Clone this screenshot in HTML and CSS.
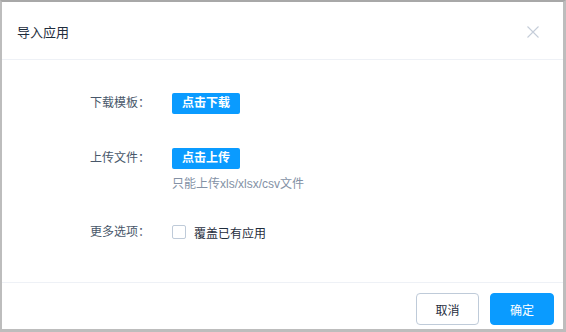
FILE: index.html
```html
<!DOCTYPE html>
<html lang="zh">
<head>
    <meta charset="UTF-8">
    <meta name="viewport" content="width=device-width, initial-scale=1.0">
    <title>导入应用</title>
    <link rel="stylesheet" href="styles.css">
</head>
<body>
    <div class="dialog">
        <div class="dialog-header">
            <span class="dialog-title">导入应用</span>
            <button class="dialog-close" aria-label="关闭">
                <svg width="12" height="12" viewBox="0 0 12 12">
                    <path d="M0.5 0.5 L11.5 11.5 M11.5 0.5 L0.5 11.5" stroke="#c5cdd9" stroke-width="1.1" fill="none"/>
                </svg>
            </button>
        </div>

        <div class="dialog-body">
            <div class="form-row row-download">
                <label class="form-label">下载模板：</label>
                <div class="form-control">
                    <button class="btn-small">点击下载</button>
                </div>
            </div>
            <div class="form-row row-upload">
                <label class="form-label">上传文件：</label>
                <div class="form-control">
                    <button class="btn-small">点击上传</button>
                    <div class="upload-tip">只能上传xls/xlsx/csv文件</div>
                </div>
            </div>
            <div class="form-row row-options">
                <label class="form-label">更多选项：</label>
                <div class="form-control">
                    <label class="checkbox">
                        <span class="checkbox-box"></span>
                        <span class="checkbox-text">覆盖已有应用</span>
                    </label>
                </div>
            </div>
        </div>

        <div class="dialog-footer">
            <button class="btn btn-default">取消</button>
            <button class="btn btn-primary">确定</button>
        </div>
    </div>
</body>
</html>
```

FILE: styles.css
```css
body {
    margin: 0;
    background-color: #fff;
    font-family: "Liberation Sans", "Noto Sans CJK SC", sans-serif;
    color: #1f2d3d;
}

.dialog {
    width: 561px;
    height: 327px;
    border-style: solid;
    border-color: #bdbdbd;
    border-width: 2px 3px 3px 2px;
    border-top-color: #a8a8a8;
    background-color: #fff;
    display: flex;
    flex-direction: column;
}

.dialog-header {
    height: 57px;
    border-bottom: 1px solid #eef1f6;
    display: flex;
    align-items: center;
    justify-content: space-between;
    padding: 0 24px 0 15px;
}

.dialog-title {
    font-size: 13px;
    color: #1f2d3d;
    padding-top: 2px;
}

.dialog-close {
    border: none;
    background: none;
    padding: 0;
    width: 12px;
    height: 12px;
    margin-top: 3px;
    cursor: pointer;
    display: flex;
}

.dialog-body {
    flex: 1;
    padding: 33px 0 0 88px;
}

.form-row {
    display: flex;
    align-items: flex-start;
}

.form-label {
    width: 82px;
    font-size: 12px;
    line-height: 21px;
    color: #48576a;
}

.row-download {
    margin-bottom: 34px;
}

.row-upload {
    margin-bottom: 30px;
}

.btn-small {
    height: 21px;
    padding: 0 10px;
    border: none;
    border-radius: 2px;
    background-color: #0a9bff;
    color: #fff;
    font-family: inherit;
    font-size: 12px;
    font-weight: bold;
    line-height: 21px;
    display: block;
}

.upload-tip {
    margin-top: 7px;
    font-size: 12px;
    line-height: 16px;
    color: #8391a5;
}

.row-options .form-label {
    line-height: 20px;
}

.checkbox {
    display: flex;
    align-items: center;
    height: 20px;
}

.checkbox-box {
    width: 12px;
    height: 12px;
    border: 1px solid #bfcbd9;
    border-radius: 2px;
    margin-right: 8px;
}

.checkbox-text {
    font-size: 12px;
    color: #1f2d3d;
}

.dialog-footer {
    border-top: 1px solid #eef1f6;
    display: flex;
    justify-content: flex-end;
    gap: 11px;
    padding: 10px 9px 4px 0;
}

.btn {
    height: 32px;
    border-radius: 4px;
    font-family: inherit;
    font-size: 12px;
    cursor: pointer;
}

.btn-default {
    width: 63px;
    border: 1px solid #bfcbd9;
    background-color: #fff;
    color: #1f2d3d;
}

.btn-primary {
    width: 64px;
    border: 1px solid #0a9bff;
    background-color: #0a9bff;
    color: #fff;
}
```
